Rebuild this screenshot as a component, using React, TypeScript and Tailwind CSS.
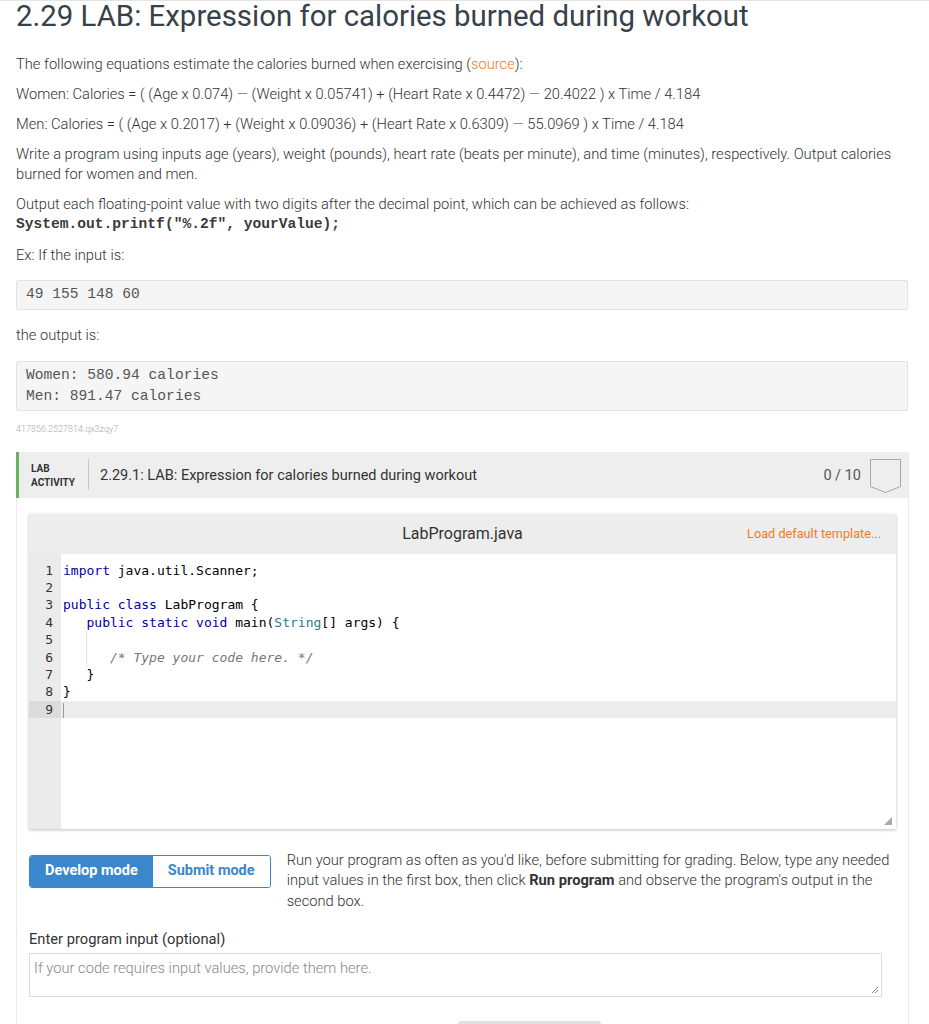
import React from "react";

const body = "font-['Roboto',sans-serif]";
const mono = "font-['Liberation_Mono',monospace]";
const ace = "font-['DejaVu_Sans_Mono',monospace]";

const codeLines: React.ReactNode[] = [
  <>
    <span className="text-[#0000a2]">import</span> java.util.Scanner;
  </>,
  <>&nbsp;</>,
  <>
    <span className="text-[#0000a2]">public</span> <span className="text-[#0000a2]">class</span> LabProgram {"{"}
  </>,
  <>
    {"   "}
    <span className="text-[#0000a2]">public</span> <span className="text-[#0000a2]">static</span>{" "}
    <span className="text-[#0000a2]">void</span> main(<span className="text-[#2f7a8a]">String</span>[] args) {"{"}
  </>,
  <>&nbsp;</>,
  <>
    {"      "}
    <span className="italic text-[#777]">/* Type your code here. */</span>
  </>,
  <>{"   }"}</>,
  <>{"}"}</>,
  <>&nbsp;</>,
];

function Badge() {
  return (
    <svg width="31" height="35" viewBox="0 0 31 35" className="block">
      <path d="M0.5 0.5 H30.5 V27.5 L15.5 33.5 L0.5 27.5 Z" fill="none" stroke="#a5a5a5" strokeWidth="1" />
    </svg>
  );
}

function Editor() {
  return (
    <div className="mx-3 mt-4 shadow-[0_1px_3px_rgba(0,0,0,0.25)]">
      <div className="h-10 bg-[#ededed] flex items-center relative">
        <div className={`flex-1 text-center text-[16px] text-[#333] ${body}`}>LabProgram.java</div>
        <div className={`absolute right-[15px] text-[12.7px] text-[#f07c22] ${body}`}>Load default template...</div>
      </div>
      <div className={`flex h-[275px] relative ${ace} text-[13px] leading-[17.4px]`}>
        <div className="w-[32px] bg-[#ebebeb] pt-[8px] text-[#333]">
          {codeLines.map((_, i) => (
            <div key={i} className={`text-right pr-[8px] ${i === 8 ? "bg-[#dcdcdc]" : ""}`}>
              {i + 1}
            </div>
          ))}
        </div>
        <div className="flex-1 pt-[8px] pl-[2px] relative text-black">
          {codeLines.map((l, i) => (
            <div key={i} className={`whitespace-pre ${i === 8 ? "bg-[#ececec] -ml-[2px] pl-[2px]" : ""}`}>
              {i === 8 ? <span className="inline-block w-px h-[15px] bg-[#999] align-middle" /> : l}
            </div>
          ))}
          <div className="absolute left-[25px] top-[77px] h-[35px] border-l border-dotted border-[#ccc]" />
          <svg width="8" height="8" className="absolute right-[4px] bottom-[4px]" viewBox="0 0 8 8">
            <path d="M8 0 L8 8 L0 8 Z" fill="#aaa" />
          </svg>
        </div>
      </div>
    </div>
  );
}

export default function App() {
  return (
    <div className={`bg-white min-h-[1024px] ${body} text-[#333] border-t border-[#e4e4e4]`}>
      <div className="pl-4 pr-[21px]">
        <h1 className="text-[29.4px] leading-[31px] text-[#37414a]">
          2.29 LAB: Expression for calories burned during workout
        </h1>

        <div className="mt-[22px] text-[14.7px] leading-[20px] font-light space-y-[10px]">
          <p>
            The following equations estimate the calories burned when exercising (
            <span className="text-[#f07c22]">source</span>):
          </p>
          <p>Women: Calories = ( (Age x 0.074) — (Weight x 0.05741) + (Heart Rate x 0.4472) — 20.4022 ) x Time / 4.184</p>
          <p>Men: Calories = ( (Age x 0.2017) + (Weight x 0.09036) + (Heart Rate x 0.6309) — 55.0969 ) x Time / 4.184</p>
          <p>
            Write a program using inputs age (years), weight (pounds), heart rate (beats per minute), and time (minutes),
            respectively. Output calories burned for women and men.
          </p>
          <div>
            <p>Output each floating-point value with two digits after the decimal point, which can be achieved as follows:</p>
            <p className={`${mono} font-bold text-[14.6px] leading-[21px] text-[#3a3a3a]`}>
              System.out.printf("%.2f", yourValue);
            </p>
          </div>
          <p>Ex: If the input is:</p>
        </div>

        <div
          className={`mt-[15px] h-[30px] bg-[#f5f5f5] border border-[#e3e3e3] rounded-[2px] px-[9px] flex items-center ${mono} text-[14.6px] text-[#555]`}
        >
          49 155 148 60
        </div>

        <p className="mt-[15px] text-[14.7px] leading-[20px] font-light">the output is:</p>

        <div
          className={`mt-[16px] bg-[#f5f5f5] border border-[#e3e3e3] rounded-[2px] px-[9px] py-[3px] ${mono} text-[14.6px] leading-[21px] text-[#555]`}
        >
          <div>Women: 580.94 calories</div>
          <div>Men: 891.47 calories</div>
        </div>

        <div className="mt-[12px] text-[9px] text-[#aaa] font-light">417856.2527814.qx3zqy7</div>

        <div className="mt-[15px] mr-[-1px] border-x border-[#ebebeb] relative">
          <div className="h-[46px] bg-[#eeeeee] border-l-[3px] border-[#6ab35e] -ml-px flex items-center">
            <div className="w-[69px] pl-[12px] pt-[2px] text-[10px] leading-[14px] font-bold text-[#333] uppercase">
              Lab
              <br />
              Activity
            </div>
            <div className="w-px h-[31px] bg-[#c7c7c7]" />
            <div className="pl-[11px] pt-[3px] text-[14.5px] text-[#333] flex-1">
              2.29.1: LAB: Expression for calories burned during workout
            </div>
            <div className="text-[14.5px] pt-[3px] text-[#555] mr-[9px]">0 / 10</div>
            <div className="mr-[7px] mt-[4px]">
              <Badge />
            </div>
          </div>

          <Editor />

          <div className="mx-3 mt-[26px] flex items-start">
            <div className="flex rounded-[3px] border border-[#3a87cc] overflow-hidden shrink-0">
              <div className="h-[31px] px-[15px] bg-[#3a87cc] text-white font-bold text-[14.5px] flex items-center">
                Develop mode
              </div>
              <div className="h-[31px] px-[15px] bg-white text-[#3a87cc] font-bold text-[14.5px] flex items-center">
                Submit mode
              </div>
            </div>
            <p className="ml-[16px] -mt-[5px] text-[14.7px] leading-[20.8px] font-light text-[#333]">
              Run your program as often as you'd like, before submitting for grading. Below, type any needed input values
              in the first box, then click <b className="font-bold">Run program</b> and observe the program's
              output in the second box.
            </p>
          </div>

          <div className="mx-3 mt-[16px] text-[14.7px] text-[#333]">Enter program input (optional)</div>
          <div className="ml-3 mr-[26px] mt-[3px] h-[44px] border border-[#dcdcdc] relative px-[4px] pt-[3px] text-[14.7px] font-light text-[#888]">
            If your code requires input values, provide them here.
            <svg width="8" height="8" viewBox="0 0 8 8" className="absolute right-[2px] bottom-[2px]">
              <path d="M7 1 L1 7 M7 4 L4 7" stroke="#888" strokeWidth="1" />
            </svg>
          </div>

          <div className="mt-[24px] ml-[441px] w-[143px] h-[10px] bg-[#e0e0e0] rounded-t-[3px]" />
        </div>
      </div>
    </div>
  );
}
